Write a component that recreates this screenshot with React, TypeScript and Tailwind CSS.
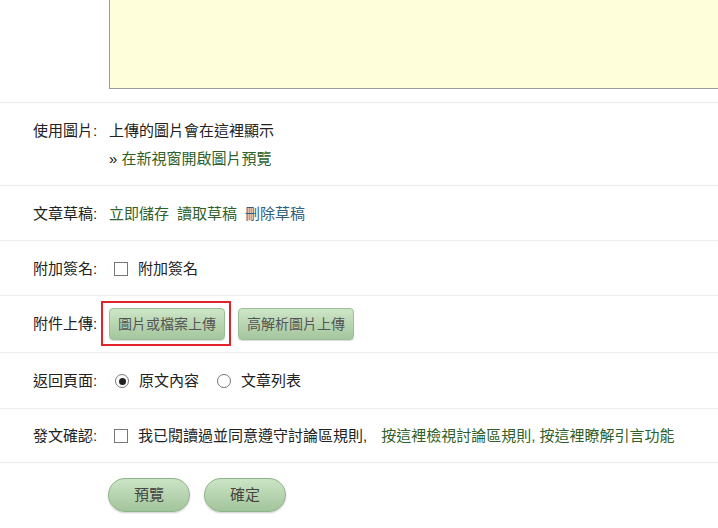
import React from 'react';

const font = { fontFamily: '"Liberation Sans", "Noto Sans CJK TC", sans-serif' };

function Row({
  label,
  className = '',
  children,
}: {
  label: string;
  className?: string;
  children: React.ReactNode;
}) {
  return (
    <div className={`flex border-t border-[#ececec] ${className}`}>
      <div className="w-[109px] shrink-0 pl-[33px] text-[#222]">{label}</div>
      <div className="flex-1">{children}</div>
    </div>
  );
}

function Checkbox() {
  return <span className="inline-block w-[14px] h-[14px] border border-[#777] bg-white ml-[5px] mr-[10px]" />;
}

function Radio({ checked }: { checked?: boolean }) {
  return (
    <span className="inline-flex items-center justify-center w-[14px] h-[14px] rounded-full border border-[#777] bg-white ml-[6px] mr-[10px]">
      {checked && <span className="w-[7px] h-[7px] rounded-full bg-[#222]" />}
    </span>
  );
}

const uploadBtn =
  'w-[116px] h-[32px] rounded-[4px] border border-[#9dbf97] bg-gradient-to-b from-[#cde6c7] to-[#a4c69e] text-[14px] text-[#555] shadow-[0_1px_1px_rgba(0,0,0,0.15)]';

const pillBtn =
  'w-[82px] h-[34px] rounded-full border border-[#8fb489] bg-gradient-to-b from-[#cbe5c5] to-[#a2c49c] text-[15px] text-[#444] shadow-[0_1px_2px_rgba(0,0,0,0.2)]';

export default function App() {
  return (
    <div
      className="w-[718px] h-[528px] overflow-hidden bg-white text-[15px] leading-[20px] text-[#222]"
      style={font}
    >
      {/* 內文輸入區 (捲動後只剩下半部) */}
      <div className="pl-[109px] mb-[13px]">
        <div className="h-[89px] w-[640px] bg-[#fffedb] border-l border-b border-[#9a9a9a]" />
      </div>

      <Row label="使用圖片:" className="pt-[14px] pb-[12px] leading-[28px]">
        <div>上傳的圖片會在這裡顯示</div>
        <div>
          <span className="text-[#111]">»</span>{' '}
          <span className="text-[#2f5f2a]">在新視窗開啟圖片預覽</span>
        </div>
      </Row>

      <Row label="文章草稿:" className="pt-[18px] pb-[16px]">
        <div className="flex gap-[8px]">
          <span className="text-[#2f5f2a]">立即儲存</span>
          <span className="text-[#2f5f2a]">讀取草稿</span>
          <span className="text-[#2f6080]">刪除草稿</span>
        </div>
      </Row>

      <Row label="附加簽名:" className="pt-[18px] pb-[16px]">
        <div className="flex items-center">
          <Checkbox />
          <span>附加簽名</span>
        </div>
      </Row>

      <Row label="附件上傳:" className="items-center h-[57px]">
        <div className="flex items-center gap-[13px]">
          <div className="relative">
            <button className={uploadBtn}>圖片或檔案上傳</button>
            <div className="absolute left-[-8px] top-[-7px] right-[-6px] bottom-[-6px] border-2 border-[#e0242a]" />
          </div>
          <button className={uploadBtn}>高解析圖片上傳</button>
        </div>
      </Row>

      <Row label="返回頁面:" className="pt-[18px] pb-[17px]">
        <div className="flex items-center">
          <Radio checked />
          <span>原文內容</span>
          <span className="w-[12px]" />
          <Radio />
          <span>文章列表</span>
        </div>
      </Row>

      <Row label="發文確認:" className="pt-[17px] pb-[16px]">
        <div className="flex items-center whitespace-nowrap">
          <Checkbox />
          <span>我已閱讀過並同意遵守討論區規則,</span>
          <span className="w-[14px]" />
          <span className="text-[#2f5f2a]">按這裡檢視討論區規則, 按這裡瞭解引言功能</span>
        </div>
      </Row>

      <div className="flex gap-[14px] border-t border-[#ececec] pt-[15px] pl-[108px]">
        <button className={pillBtn}>預覽</button>
        <button className={pillBtn}>確定</button>
      </div>
    </div>
  );
}
